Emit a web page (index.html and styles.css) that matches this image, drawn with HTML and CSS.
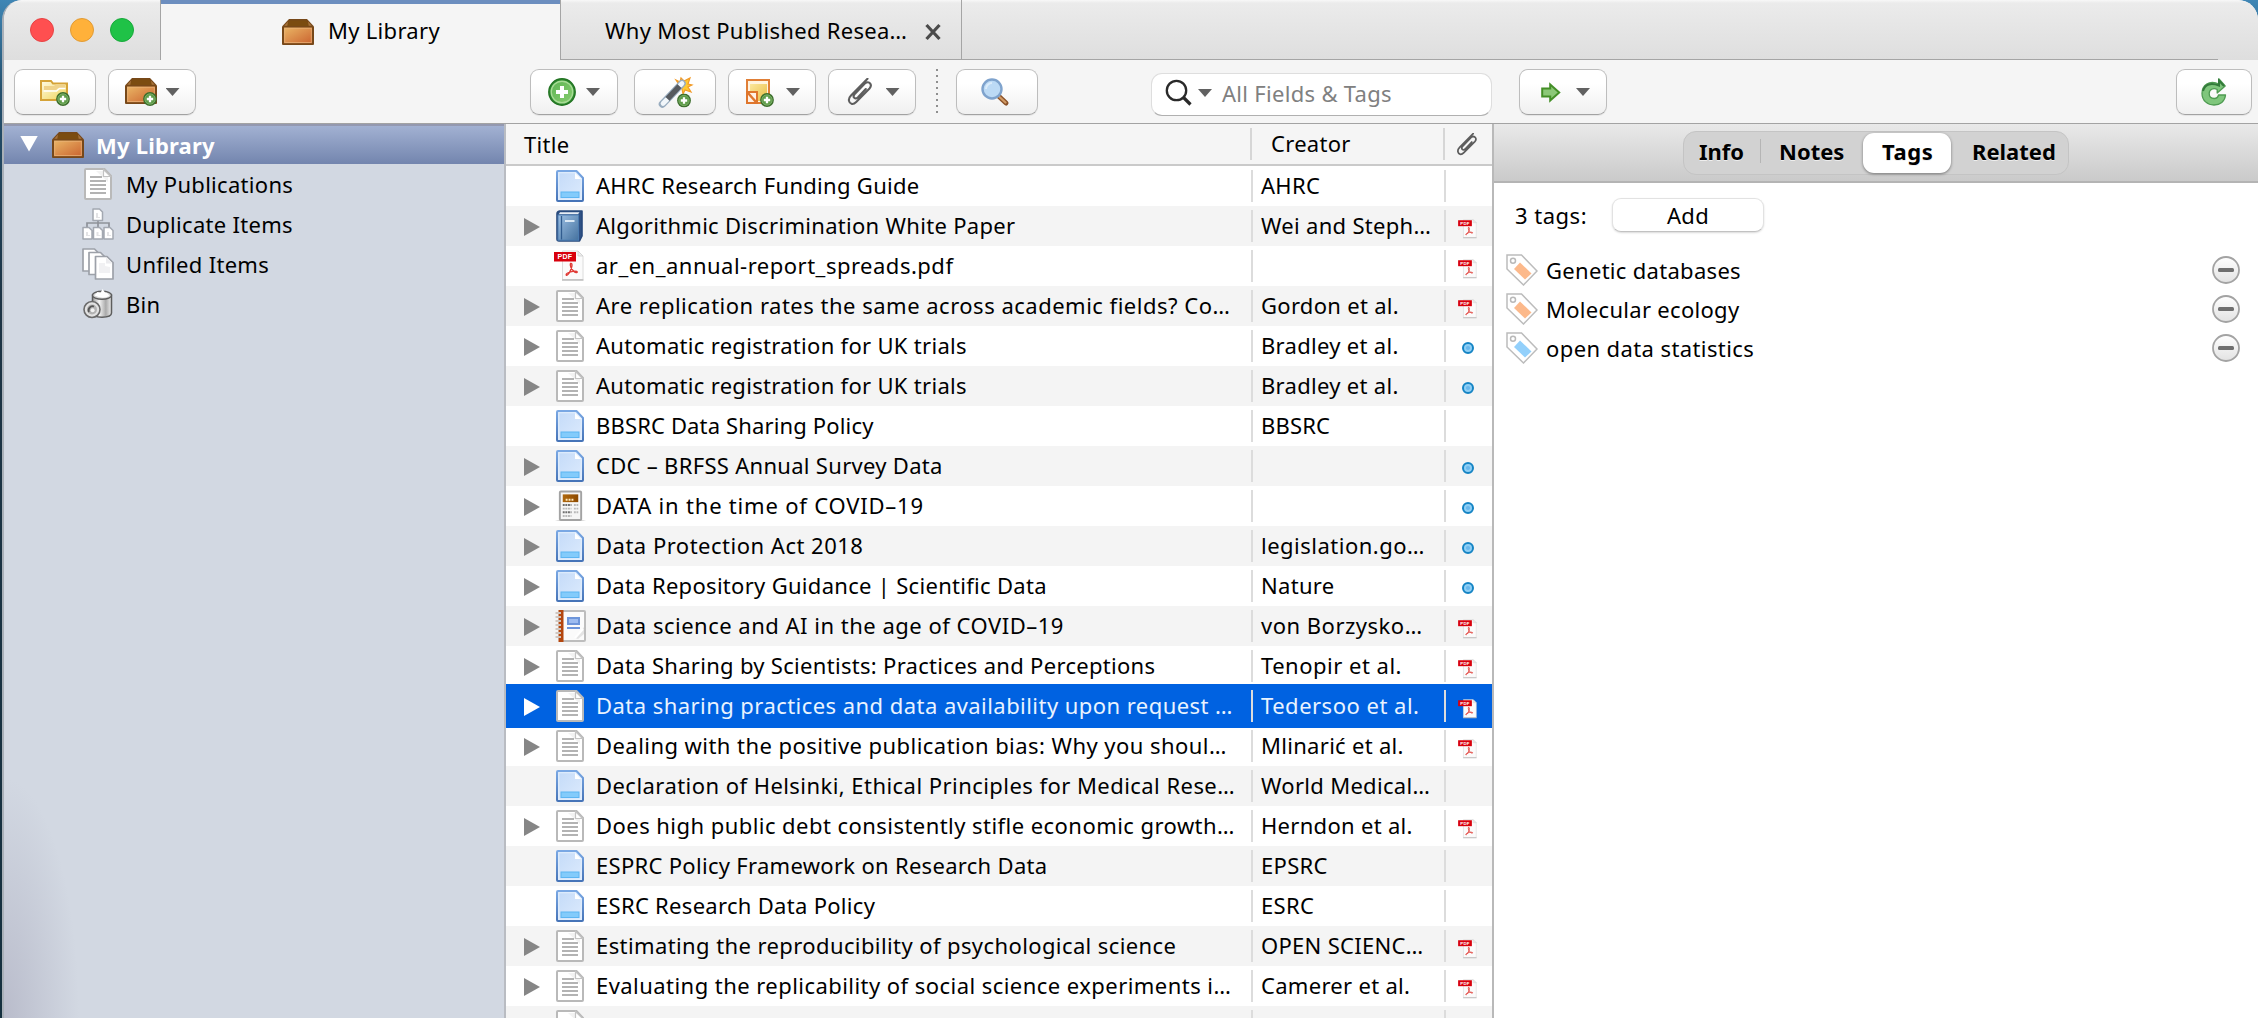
FILE: index.html
```html
<!DOCTYPE html>
<html lang="en">
<head>
<meta charset="utf-8">
<title>My Library</title>
<link rel="stylesheet" href="styles.css">
</head>
<body>
<svg class="defs" width="0" height="0" aria-hidden="true">
  <defs>
    <linearGradient id="g-box" x1="0" y1="0" x2="1" y2="1"><stop offset="0" stop-color="#eab565"/><stop offset="1" stop-color="#cb6430"/></linearGradient>
    <linearGradient id="g-folder" x1="0" y1="0" x2="1" y2="1"><stop offset="0" stop-color="#fffbe4"/><stop offset="1" stop-color="#efd354"/></linearGradient>
    <linearGradient id="g-web" x1="0" y1="0" x2="1" y2="1"><stop offset="0" stop-color="#c3daf8"/><stop offset="1" stop-color="#ddebfd"/></linearGradient>
    <linearGradient id="g-webs" x1="0" y1="0" x2="0" y2="1"><stop offset="0" stop-color="#7aa8e4"/><stop offset="1" stop-color="#4674b8"/></linearGradient>
    <linearGradient id="g-book" x1="0" y1="0" x2="1" y2="1"><stop offset="0" stop-color="#9dc0e4"/><stop offset="1" stop-color="#45729f"/></linearGradient>
    <linearGradient id="g-metal" x1="0" y1="0" x2="1" y2="0"><stop offset="0" stop-color="#999"/><stop offset=".35" stop-color="#f4f4f4"/><stop offset=".7" stop-color="#aaa"/><stop offset="1" stop-color="#eee"/></linearGradient>
    <linearGradient id="g-gold" x1="0" y1="0" x2="1" y2="0"><stop offset="0" stop-color="#b0690e"/><stop offset="1" stop-color="#8d4a00"/></linearGradient>
    <linearGradient id="g-note" x1="0" y1="0" x2="1" y2="1"><stop offset="0" stop-color="#fbe79c"/><stop offset="1" stop-color="#e9bd45"/></linearGradient>
    <linearGradient id="g-green" x1="0" y1="0" x2="1" y2="1"><stop offset="0" stop-color="#5fb555"/><stop offset="1" stop-color="#86cc6e"/></linearGradient>
    <linearGradient id="g-minus" x1="0" y1="0" x2="0" y2="1"><stop offset="0" stop-color="#fff"/><stop offset="1" stop-color="#e2e2e2"/></linearGradient>

    <symbol id="badge" viewBox="0 0 14 14">
      <circle cx="7" cy="7" r="6.9" fill="#3c6e2c"/><circle cx="7" cy="7" r="5.2" fill="#5e9c49" stroke="#8cbd79" stroke-width=".7"/>
      <path d="M7 3.8v6.4M3.8 7h6.4" stroke="#fff" stroke-width="2.3"/>
    </symbol>
    <symbol id="box" viewBox="0 0 32 26">
      <path d="M7 0h18l7 7.5V25q0 1-1 1H1q-1 0-1-1V7.500z" fill="#774819"/>
      <path d="M7.500 1.500h17l3 5.500h-23z" fill="#7b4c10"/>
      <path d="M6 2.500L2.300 6.800h3zM26 2.500l3.700 4.300h-3z" fill="#a8743d"/>
      <rect x="2" y="8.600" width="28" height="15.600" fill="url(#g-box)"/>
      <rect x="2.700" y="9.300" width="26.600" height="14.200" fill="none" stroke="#e9b57c" stroke-width="1" opacity=".7"/>
    </symbol>
    <symbol id="doc" viewBox="0 0 28 32">
      <path d="M2 1h18.500L27 8v22q0 1-1 1H2q-1 0-1-1V2q0-1 1-1z" fill="#fff" stroke="#b9b9b9" stroke-width="2"/>
      <path d="M12 3h7v6h5v5z" fill="#e9e9e9" opacity=".6"/>
      <path d="M19.500 1.500V8.500H26.500z" fill="#fff" stroke="#c3c3c3" stroke-width="1.200"/>
      <path d="M6 9h12M6 13h16M6 17h16M6 21h16M6 25h16" stroke="#b3b3b3" stroke-width="1.900"/>
    </symbol>
    <symbol id="web" viewBox="0 0 28 32">
      <path d="M2 1h18.500L27 8v22q0 1-1 1H2q-1 0-1-1V2q0-1 1-1z" fill="url(#g-web)" stroke="url(#g-webs)" stroke-width="2"/>
      <path d="M2.800 2.800h16.500l5.900 6v20.400H2.800z" fill="none" stroke="#e3effd" stroke-width="1.100"/>
      <path d="M19 3v6h6z" fill="#fff"/>
      <rect x="5" y="22" width="18" height="5.500" fill="#83cbfb" stroke="#5db5f2" stroke-width="1"/>
    </symbol>
    <symbol id="book" viewBox="0 0 28 32">
      <path d="M3.500 1H26v25l-2.500 5H3q-2 0-2-2V4q0-2.500 2.500-3z" fill="#2f5184" stroke="#27497c" stroke-width="1.600" stroke-linejoin="round"/>
      <path d="M4 2.200h19.500l-1.500 2H2.800z" fill="#e8eef5"/>
      <rect x="2" y="5" width="20.500" height="25.200" fill="url(#g-book)" stroke="#4c7cb1" stroke-width="1"/>
      <path d="M5.500 6v23.500" stroke="#315c8f" stroke-width="1.300"/>
      <path d="M9 11h9.500" stroke="#e7f1fa" stroke-width="1.800"/>
    </symbol>
    <symbol id="pdf" viewBox="0 0 30 32">
      <path d="M8.500 1H24l5 5v23.500H8.500z" fill="#fbfbfb" stroke="#dcdcdc"/>
      <path d="M8 30h21.500" stroke="#bdbdbd" stroke-width="1.500"/>
      <path d="M24 1v5h5z" fill="#eee" stroke="#ccc" stroke-width=".7"/>
      <rect x="0" y="2" width="22" height="9.500" fill="#d8000c"/>
      <text x="11" y="9.300" text-anchor="middle" font-family="Liberation Sans" font-weight="700" font-size="7" fill="#fff">PDF</text>
      <path d="M16.500 13.500c2.800-1 1.200 5.500-1.300 9.500-1.500 2.400-3.200 3-3 1.500.3-1.700 8-4.200 10.600-3 1.500.9-.8 1.800-2.600.2-2.800-2.200-4.600-6.300-3.700-8.200z" fill="none" stroke="#e03a35" stroke-width="1.400"/>
    </symbol>
    <symbol id="news" viewBox="0 0 32 32">
      <path d="M0 31q16-3 32 0z" fill="#9a9a9a" opacity=".7"/>
      <rect x="5" y="1" width="22" height="29.500" rx="1" fill="#f6f6f6" stroke="#a3a3a3" stroke-width="2"/>
      <rect x="8" y="4" width="16" height="8" fill="url(#g-gold)"/>
      <path d="M11 9.500h8" stroke="#ffe9bd" stroke-width="2" stroke-dasharray="2 1"/>
      <path d="M8 15h9M8 22.500h9" stroke="#6f6f6f" stroke-width="2" stroke-dasharray="2 .7"/>
      <path d="M8 18.700h9M8 26.300h9M19.500 15h4.500M19.500 18.700h4.500M19.500 22.500h4.500" stroke="#b9b9b9" stroke-width="2" stroke-dasharray="2 .7"/>
    </symbol>
    <symbol id="journal" viewBox="0 0 31 32">
      <path d="M6 1h23q1 0 1 1v28q0 1-1 1H6z" fill="#fbfbfb" stroke="#bdbdbd" stroke-width="2"/>
      <rect x="3.500" y="0" width="5" height="32" fill="#b4470f"/>
      <path d="M.5 3h5.500M.5 7h5.500M.5 11h5.500M.5 15h5.500M.5 19h5.500M.5 23h5.500M.5 27h5.500" stroke="#cfc6bf" stroke-width="1.800"/>
      <rect x="13" y="8" width="11" height="6" fill="#9dbcf0" stroke="#6d95da" stroke-width="2"/>
      <path d="M12 18h13" stroke="#6d95da" stroke-width="2"/>
      <path d="M20 28l9-11v7l-6 5z" fill="#e4e4e4"/><path d="M20 28l8-9" stroke="#fff" stroke-width="2"/>
    </symbol>
    <symbol id="dup" viewBox="0 0 32 32">
      <path d="M16 12v3M5 19v-4h22v4M16 15v4" fill="none" stroke="#8e9299" stroke-width="1.700"/>
      <g fill="#fff" stroke="#a3a8b1" stroke-width="1.500">
        <path d="M11 1h6.500l3 3v8.500H11zM1 19.500h6l3 3V31H1zM11.500 19.500h6l3 3V31h-9zM22 19.500h6l3 3V31h-9z" stroke-linejoin="round"/>
      </g>
      <path d="M14 5h2v4h2v1h-4zM4 24h2v3h2v1H4zM14.500 24h2v3h2v1h-4zM25 24h2v3h2v1h-4z" fill="#e3e3e5"/>
    </symbol>
    <symbol id="unfiled" viewBox="0 0 32 32">
      <g fill="#fff" stroke="#9da1a9" stroke-width="1.700" stroke-linejoin="round">
        <path d="M1 1h11.500l4 4v18H1z"/><path d="M7 4.500h11.500l4 4v18H7z"/><path d="M13.500 8.500H25l6 6V31H13.500z"/>
      </g>
      <path d="M24 9.500v6h6z" fill="#ececef"/><path d="M17 15h6v3l5 1v6H17z" fill="#f1f1f3"/>
    </symbol>
    <symbol id="bin" viewBox="0 0 30 30">
      <path d="M9.500 6v18c0 5.500 19 5.500 19 0V6z" fill="url(#g-metal)" stroke="#5d5d5d" stroke-width="1.500"/>
      <ellipse cx="19" cy="6.300" rx="9.500" ry="4" fill="#d7d7d7" stroke="#5d5d5d" stroke-width="1.400"/>
      <path d="M11.500 6.500l3-3.500 3 1 2-4 2.500 3.500 2 .2 2.500 3.300q-7 3.500-15-.5z" fill="#fff"/>
      <circle cx="9" cy="20.500" r="8" fill="#e2e2e2" stroke="#6a6a6a" stroke-width="1.600"/>
      <circle cx="9" cy="20.500" r="5" fill="#b2b2b2"/><path d="M6 23a4 4 0 0 1 5-5.500" stroke="#555" stroke-width="1.800" fill="none"/><circle cx="9.600" cy="21.300" r="2" fill="#f2f2f2"/>
    </symbol>
    <symbol id="clip" viewBox="0 0 26 28">
      <path d="M20.500.8L4 17.500c-3.800 3.900-1.700 7.700.5 8.300 1.600.5 3-.2 4.700-1.900L22.500 10.500c3-3.300.4-7.900-4.200-5.500L7.500 16.300c-2.300 2.800.6 5.600 3.300 3.200l8-8.500" fill="none" stroke="#5d5d5d" stroke-width="2.100" stroke-linecap="round"/>
    </symbol>
    <symbol id="tag" viewBox="0 0 32 32">
      <path d="M1 1h14.500L31 17 17.500 31 1 15z" fill="#fff" stroke="#bcbcbc" stroke-width="1.500"/>
      <circle cx="7" cy="6.700" r="2.500" fill="#fff" stroke="#b9b9b9" stroke-width="1.500"/>
      <path d="M14 8.500L25.500 19.500 19 25.500 8 15z" fill="currentColor"/>
    </symbol>
    <symbol id="minus" viewBox="0 0 28 28">
      <circle cx="14" cy="14" r="13" fill="url(#g-minus)" stroke="#a3a3a3" stroke-width="1.800"/>
      <rect x="6" y="12" width="16" height="4" rx="1.500" fill="#6f6f6f"/>
    </symbol>
    <symbol id="dot" viewBox="0 0 12 12">
      <circle cx="6" cy="6" r="5" fill="#8fcff5" stroke="#1584c4" stroke-width="2"/><circle cx="6" cy="6" r="2.100" fill="#69b7ec"/>
    </symbol>
  </defs>
</svg>

<div class="window">
  <header class="titlebar">
    <div class="lights"><i class="light red"></i><i class="light amber"></i><i class="light green"></i></div>
    <div class="tab active"><svg class="i-box"><use href="#box"/></svg><span>My Library</span></div>
    <div class="tab doc-tab"><span>Why Most Published Resea…</span><svg class="close" viewBox="0 0 16 18"><path d="M1.500 2l13 14M14.500 2l-13 14" stroke="#4b4b4b" stroke-width="3.200"/></svg></div>
    <div class="tab-rest"></div>
    <div class="tab-end"></div>
  </header>

  <div class="toolbar">
    <div class="group lib-tools">
      <button class="btn w82"><svg width="30" height="27" viewBox="0 0 30 27"><path d="M1 21V2h10l2 2.500h14V21z" fill="url(#g-folder)" stroke="#d5a338" stroke-width="2"/><path d="M4 7h10l2-2h9v4h-7l-2 2H4z" fill="#efd28a"/><path d="M3.500 12h13l3-2.500h6" stroke="#fff" stroke-width="1.500" fill="none"/><use href="#badge" x="16" y="13" width="14" height="14"/></svg></button>
      <button class="btn w88 lib-btn"><svg width="32" height="28" viewBox="0 0 32 28"><use href="#box" width="32" height="26"/><use href="#badge" x="18" y="14" width="14" height="14"/></svg><i class="caret"></i></button>
    </div>
    <div class="group item-tools">
      <button class="btn w88"><svg width="28" height="28" viewBox="0 0 28 28"><circle cx="14" cy="14" r="13.200" fill="#2f8c30" stroke="#237423" stroke-width="1.400"/><circle cx="14" cy="14" r="10.800" fill="url(#g-green)" stroke="#a8dc96" stroke-width="1.400"/><path d="M14 8v12M8 14h12" stroke="#fff" stroke-width="4"/></svg><i class="caret"></i></button>
      <button class="btn w82 wand"><svg width="33" height="31" viewBox="0 0 33 31"><path d="M17 3l4 2 1-4 3 3 6-3-2 6 4 1-4 2 3 5-6-2-2 4-1-5z" fill="#fec931" stroke="#f29a27" stroke-width="1.200"/><path d="M3.500 27L23 6.500" stroke="#98acbf" stroke-width="7.500" stroke-linecap="round"/><path d="M4 26.500l4-4M21 8.500l2-2" stroke="#f1f6fa" stroke-width="4.600" stroke-linecap="round"/><path d="M8.500 21.800L20.500 9.200" stroke="#565a5f" stroke-width="5.500"/><use href="#badge" x="18" y="16.500" width="14" height="14"/></svg></button>
      <button class="btn w88 note"><svg width="28" height="29" viewBox="0 0 28 29"><rect x="1" y="2" width="22" height="23" fill="#fff3de" stroke="#e07f37" stroke-width="2"/><rect x="4" y="6" width="17" height="17" fill="url(#g-note)"/><path d="M1 14h10v11H1z" fill="#fff0e4" stroke="#df762c" stroke-width="2"/><path d="M2 15l8 9" stroke="#df762c" stroke-width="2.500"/><use href="#badge" x="14" y="15" width="14" height="14"/></svg><i class="caret"></i></button>
      <button class="btn w88 attach"><svg width="26" height="28"><use href="#clip"/></svg><i class="caret"></i></button>
    </div>
    <i class="dots"></i>
    <button class="btn w82 find"><svg width="28" height="28" viewBox="0 0 28 28"><path d="M17.500 18l7.500 7" stroke="#8a5128" stroke-width="5" stroke-linecap="round"/><path d="M18.500 19l6 5.500" stroke="#d19a64" stroke-width="2.300" stroke-linecap="round"/><circle cx="11" cy="11" r="9.500" fill="#bcdaf5" stroke="#7fa3cd" stroke-width="2.400"/><path d="M5 11a6 6 0 0 1 6-6" stroke="#dbecfb" stroke-width="2" fill="none"/></svg></button>
    <div class="search"><svg width="28" height="28" viewBox="0 0 28 28" fill="none" stroke="#2a2a2a"><circle cx="11.500" cy="11.500" r="9.700" stroke-width="2.300"/><path d="M18.500 18.500l7 7" stroke-width="3.200"/></svg><i class="caret"></i><span>All Fields &amp; Tags</span></div>
    <button class="btn w88 locate"><svg width="20" height="19" viewBox="0 0 20 19"><path d="M1.200 5.500h8V1.500l9 8-9 8v-4h-8z" fill="#8cc878" stroke="#448f27" stroke-width="2"/></svg><i class="caret"></i></button>
    <button class="btn sync"><svg width="26" height="28" viewBox="0 0 26 28"><path d="M18 1v5C8 1.500 1 7.500 1 15.500c0 7 5.500 11.500 12 11.500 6 0 11-3.500 11.500-10h-7c-.5 2.500-2 3.500-4.300 3.500-3 0-5-2-5-5 0-4 4-6 8-4V15l8-7z" fill="#7fc67c" stroke="#4f9b52" stroke-width="1.300" stroke-linejoin="round"/><path d="M2 13C4 6 10 4.500 18 7.500V2.500l5 5.500" fill="none" stroke="#337a3a" stroke-width="2"/></svg></button>
  </div>

  <main class="panes">
    <nav class="sidebar">
      <div class="side-row selected"><i class="tri-down"></i><svg class="i-box"><use href="#box"/></svg><span>My Library</span></div>
      <div class="side-row"><svg class="i-32"><use href="#doc"/></svg><span>My Publications</span></div>
      <div class="side-row"><svg class="i-32"><use href="#dup"/></svg><span>Duplicate Items</span></div>
      <div class="side-row"><svg class="i-32"><use href="#unfiled"/></svg><span>Unfiled Items</span></div>
      <div class="side-row"><svg class="i-30"><use href="#bin"/></svg><span>Bin</span></div>
    </nav>

    <section class="items">
      <div class="head"><span class="h-title">Title</span><span class="h-creator">Creator</span><span class="h-att"><svg><use href="#clip"/></svg></span></div>
      <div class="row"><i></i><svg><use href="#web"/></svg><b>AHRC Research Funding Guide</b><em>AHRC</em><s></s></div>
      <div class="row"><i class="tri"></i><svg><use href="#book"/></svg><b>Algorithmic Discrimination White Paper</b><em>Wei and Steph…</em><s><svg class="att"><use href="#pdf"/></svg></s></div>
      <div class="row"><i></i><svg class="file"><use href="#pdf"/></svg><b class="wide-text">ar_en_annual-report_spreads.pdf</b><em></em><s><svg class="att"><use href="#pdf"/></svg></s></div>
      <div class="row"><i class="tri"></i><svg><use href="#doc"/></svg><b class="wide-text">Are replication rates the same across academic fields? Co…</b><em>Gordon et al.</em><s><svg class="att"><use href="#pdf"/></svg></s></div>
      <div class="row"><i class="tri"></i><svg><use href="#doc"/></svg><b>Automatic registration for UK trials</b><em>Bradley et al.</em><s><svg class="dot"><use href="#dot"/></svg></s></div>
      <div class="row"><i class="tri"></i><svg><use href="#doc"/></svg><b>Automatic registration for UK trials</b><em>Bradley et al.</em><s><svg class="dot"><use href="#dot"/></svg></s></div>
      <div class="row"><i></i><svg><use href="#web"/></svg><b class="tight-text">BBSRC Data Sharing Policy</b><em class="tight-text">BBSRC</em><s></s></div>
      <div class="row"><i class="tri"></i><svg><use href="#web"/></svg><b>CDC – BRFSS Annual Survey Data</b><em></em><s><svg class="dot"><use href="#dot"/></svg></s></div>
      <div class="row"><i class="tri"></i><svg class="wide"><use href="#news"/></svg><b class="wider-text">DATA in the time of COVID–19</b><em></em><s><svg class="dot"><use href="#dot"/></svg></s></div>
      <div class="row"><i class="tri"></i><svg><use href="#web"/></svg><b class="wide-text">Data Protection Act 2018</b><em class="wide-text">legislation.go…</em><s><svg class="dot"><use href="#dot"/></svg></s></div>
      <div class="row"><i class="tri"></i><svg><use href="#web"/></svg><b>Data Repository Guidance | Scientific Data</b><em>Nature</em><s><svg class="dot"><use href="#dot"/></svg></s></div>
      <div class="row"><i class="tri"></i><svg class="wide"><use href="#journal"/></svg><b class="wide-text">Data science and AI in the age of COVID–19</b><em class="wide-text">von Borzysko…</em><s><svg class="att"><use href="#pdf"/></svg></s></div>
      <div class="row"><i class="tri"></i><svg><use href="#doc"/></svg><b>Data Sharing by Scientists: Practices and Perceptions</b><em class="wide-text">Tenopir et al.</em><s><svg class="att"><use href="#pdf"/></svg></s></div>
      <div class="row picked"><i class="tri"></i><svg><use href="#doc"/></svg><b class="long-text">Data sharing practices and data availability upon request …</b><em class="wide-text">Tedersoo et al.</em><s><svg class="att"><use href="#pdf"/></svg></s></div>
      <div class="row"><i class="tri"></i><svg><use href="#doc"/></svg><b class="long-text">Dealing with the positive publication bias: Why you shoul…</b><em>Mlinarić et al.</em><s><svg class="att"><use href="#pdf"/></svg></s></div>
      <div class="row"><i></i><svg><use href="#web"/></svg><b class="long-text">Declaration of Helsinki, Ethical Principles for Medical Rese…</b><em>World Medical…</em><s></s></div>
      <div class="row"><i class="tri"></i><svg><use href="#doc"/></svg><b class="long-text">Does high public debt consistently stifle economic growth…</b><em>Herndon et al.</em><s><svg class="att"><use href="#pdf"/></svg></s></div>
      <div class="row"><i></i><svg><use href="#web"/></svg><b>ESPRC Policy Framework on Research Data</b><em>EPSRC</em><s></s></div>
      <div class="row"><i></i><svg><use href="#web"/></svg><b>ESRC Research Data Policy</b><em>ESRC</em><s></s></div>
      <div class="row"><i class="tri"></i><svg><use href="#doc"/></svg><b class="mid-text">Estimating the reproducibility of psychological science</b><em>OPEN SCIENC…</em><s><svg class="att"><use href="#pdf"/></svg></s></div>
      <div class="row"><i class="tri"></i><svg><use href="#doc"/></svg><b class="long-text">Evaluating the replicability of social science experiments i…</b><em>Camerer et al.</em><s><svg class="att"><use href="#pdf"/></svg></s></div>
      <div class="row"><i class="tri"></i><svg><use href="#doc"/></svg><b>Examining the feasibility of common research methods and…</b><em>Ashwood et al.</em><s></s></div>
    </section>

    <aside class="details">
      <div class="detail-head">
        <div class="segments"><span class="seg info">Info</span><span class="seg notes">Notes</span><span class="seg on">Tags</span><span class="seg related">Related</span></div>
      </div>
      <div class="tag-bar"><span>3 tags:</span><button class="add">Add</button></div>
      <ul class="tags">
        <li><svg class="tag orange"><use href="#tag"/></svg><span>Genetic databases</span><svg class="minus"><use href="#minus"/></svg></li>
        <li><svg class="tag orange"><use href="#tag"/></svg><span>Molecular ecology</span><svg class="minus"><use href="#minus"/></svg></li>
        <li><svg class="tag blue"><use href="#tag"/></svg><span class="mid-text">open data statistics</span><svg class="minus"><use href="#minus"/></svg></li>
      </ul>
    </aside>
  </main>
</div>
</body>
</html>
```
FILE: styles.css
```css
* { box-sizing: border-box; }
body {
  margin: 0;
  height: 1018px;
  overflow: hidden;
  background: linear-gradient(to bottom, #3f86b5 0, #24506e 90px, #1d3445 300px, #15303f 100%);
  color: #000;
  font: 22px/40px "Noto Sans", "Open Sans", sans-serif;
  letter-spacing: 0.3px;
}
.defs { position: absolute; }
svg { display: block; flex: none; overflow: visible; }
span, b, em { white-space: nowrap; }
.tight-text { letter-spacing: 0.15px; }
.mid-text { letter-spacing: 0.4px; }
.long-text { letter-spacing: 0.45px; }
.wide-text { letter-spacing: 0.5px; }
.wider-text { letter-spacing: 0.8px; }

.window {
  display: flex;
  flex-direction: column;
  height: 1018px;
  margin-left: 2px;
  border-left: 2px solid #a9b0b8;
  border-radius: 20px 20px 0 0;
  background: #f5f5f5;
  overflow: hidden;
}

/* title bar */
.titlebar { display: flex; flex: none; height: 60px; background: linear-gradient(#f8f8f8 0, #ebebeb 3px, #dedede 100%); }
.lights { display: flex; gap: 16px; width: 157px; padding: 18px 0 0 26px; border-right: 1px solid #a5a5a5; }
.light { width: 24px; height: 24px; border-radius: 50%; border: 1px solid; }
.red { background: #ff4f50; border-color: #e64345; }
.amber { background: #ffb13a; border-color: #e09b35; }
.green { background: #1fc247; border-color: #18a93b; }
.tab { display: flex; align-items: center; }
.active { width: 399px; padding: 4px 0 0 121px; gap: 14px; background: #f5f5f5; border-top: 4px solid #6c8ebf; }
.active span { margin-top: -8px; }
.active svg { margin-top: -5px; }
.i-box { width: 32px; height: 26px; }
.doc-tab { width: 402px; padding-left: 44px; border: solid #a5a5a5; border-width: 0 1px 1px; }
.doc-tab span { width: 320px; margin-top: 1px; }
.close { width: 16px; height: 18px; margin-top: 5px; }
.tab-rest { flex: 1; border-bottom: 1px solid #a5a5a5; }
.tab-end { width: 40px; }

/* toolbar */
.toolbar { display: flex; flex: none; height: 64px; padding: 9px 6px 0 10px; border-bottom: 1px solid #a3a3a3; }
.group { display: flex; gap: 12px; }
.lib-tools { width: 516px; }
.item-tools { width: 406px; }
.wand { margin: 0 0 0 4px; }
.btn {
  display: flex;
  align-items: center;
  justify-content: center;
  gap: 10px;
  height: 46px;
  padding: 0;
  border: 1px solid #bdbdbd;
  border-bottom-color: #a2a2a2;
  border-radius: 9px;
  background: linear-gradient(#fff 30%, #f0f0f0);
  box-shadow: 0 1px 1px rgba(0, 0, 0, .07);
}
.w82 { width: 82px; }
.w88 { width: 88px; }
.lib-btn { gap: 9px; }
.find { padding-right: 4px; }
.attach { gap: 13px; padding-left: 2px; }
.caret { flex: none; width: 14px; height: 8px; background: #616161; clip-path: polygon(0 0, 100% 0, 50% 100%); }
.dots { width: 2px; height: 46px; margin-right: 18px; background: repeating-linear-gradient(#8f8f8f 0 2px, transparent 2px 6px); }
.search {
  display: flex;
  align-items: center;
  gap: 5px;
  width: 341px;
  height: 43px;
  margin: 4px 0 0 113px;
  padding: 0 0 3px 13px;
  border: 1px solid #dedede;
  border-bottom-color: #b0b0b0;
  border-radius: 11px;
  background: #fff;
  color: #808080;
}
.search span { margin-left: 5px; }
.locate { margin-left: 27px; gap: 15px; padding-left: 5px; }
.note { gap: 12px; padding-left: 2px; }
.sync { width: 76px; margin-left: auto; }

/* panes */
.panes { display: flex; flex: 1; min-height: 0; }
.sidebar {
  width: 502px;
  border-right: 2px solid #b9bcc2;
  background:
    radial-gradient(ellipse 75px 240px at 0 100%, #b9bccb, transparent),
    #d2d8e2;
}
.side-row { display: flex; align-items: center; height: 40px; padding-left: 78px; }
.side-row span { margin-left: 12px; }
.i-32 { width: 32px; height: 32px; }
.i-30 { width: 32px; height: 30px; }
.side-row.selected { padding: 0 0 1px 16px; border-top: 2px solid #9499b0; background: linear-gradient(#a2b1d2, #7385ae); color: #fff; font-weight: 700; letter-spacing: 0.2px; }
.tri-down { width: 18px; height: 16px; margin: -2px 14px 0 0; background: #fff; clip-path: polygon(0 0, 100% 0, 50% 100%); }

.items { width: 988px; border-right: 2px solid #b9b9b9; background: #fff; overflow: hidden; }
.head { display: flex; align-items: center; height: 42px; padding-left: 18px; border-bottom: 2px solid #cacaca; background: #f5f5f5; }
.h-title { width: 726px; line-height: 38px; }
.h-creator { width: 193px; height: 32px; padding-left: 19px; border-left: 2px solid #d6d6d6; line-height: 30px; }
.h-att { height: 32px; padding: 5px 0 0 11px; border-left: 2px solid #d6d6d6; }
.h-att svg { width: 22px; height: 23px; }
.row { display: grid; grid-template-columns: 32px 40px 655px 193px 1fr; align-items: center; height: 40px; padding-left: 18px; }
.row:nth-child(odd) { background: #f4f4f4; }
.row > svg { width: 28px; height: 32px; }
.row > .file { width: 30px; margin-left: -2px; }
.row > .wide { width: 31px; margin-left: -1px; }
.row b { height: 40px; font-weight: 400; line-height: 38px; }
.row em { height: 32px; padding-left: 8px; border-left: 2px solid #dcdcdc; font-style: normal; line-height: 30px; }
.row s { height: 32px; padding: 9px 0 0 12px; border-left: 2px solid #dcdcdc; }
.tri { width: 16px; height: 18px; margin-top: 2px; background: #868686; clip-path: polygon(0 0, 100% 50%, 0 100%); }
.att { width: 19px; height: 20px; }
.dot { width: 12px; height: 12px; margin: 3px 0 0 4px; }
.row.picked { position: relative; background: #0062e1; box-shadow: 0 -2px #0062e1, 0 2px #0062e1; color: #e9f3ff; }
.picked .tri { background: #fff; }

.details { flex: 1; background: #fff; }
.detail-head { display: flex; height: 59px; padding: 7px 0 0 189px; border-bottom: 2px solid #b4b4b4; background: linear-gradient(#e9e9e9, #cacaca); }
.segments { display: flex; align-items: center; width: 386px; height: 44px; padding-left: 15px; border: 1px solid #c4c4c4; border-radius: 13px; background: #d2d2d2; font-weight: 700; }
.seg { line-height: 24px; margin-top: -4px; letter-spacing: 0; text-shadow: 0 1px #eee; }
.info { width: 62px; border-right: 1px solid #b5b5b5; }
.notes { width: 102px; padding-left: 18px; }
.on { width: 88px; height: 40px; margin-top: 0; padding: 6px 0 0 19px; border-radius: 11px; background: #fff; box-shadow: 0 1px 3px rgba(0, 0, 0, .45); letter-spacing: 0.6px; }
.related { padding-left: 21px; }
.tag-bar { display: flex; align-items: center; height: 67px; padding: 0 0 3px 21px; }
.tag-bar span { width: 97px; letter-spacing: 0.5px; }
.add { width: 152px; height: 34px; padding: 0; border: 1px solid #e2e2e2; border-bottom-color: #c2c2c2; border-radius: 9px; background: #fff; box-shadow: 0 1px 2px rgba(0, 0, 0, .15); color: #000; font: inherit; line-height: 30px; letter-spacing: inherit; }
.tags { margin: 0; padding: 0; list-style: none; }
.tags li { display: flex; align-items: center; height: 39px; padding: 0 18px 0 12px; }
.tags span { flex: 1; margin-left: 8px; line-height: 38px; }
.tag { width: 32px; height: 32px; }
.orange { color: #fcb98b; }
.blue { color: #93d0fb; }
.minus { width: 28px; height: 28px; }
```
